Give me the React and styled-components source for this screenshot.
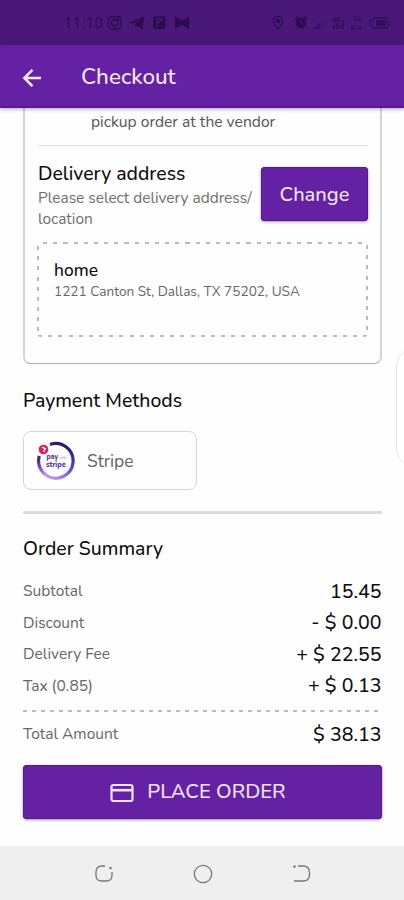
import React from 'react';
import styled, { createGlobalStyle, css } from 'styled-components';

const Global = createGlobalStyle`
  * { box-sizing: border-box; }
  body { margin: 0; background: #fff; }
`;

const Screen = styled.div`
  position: relative;
  width: 404px;
  height: 900px;
  overflow: hidden;
  display: flex;
  flex-direction: column;
  background: #fefefe;
  color: #0e0e0e;
  font-family: Nunito, Lato, sans-serif;
`;

const StatusBar = styled.header`
  flex: none;
  height: 45px;
  padding: 1px 14px 0 64px;
  display: flex;
  align-items: center;
  justify-content: space-between;
  background: #4a1879;
  color: #2b0d4e;
`;

const Clock = styled.span`
  width: 43px;
  font: 400 15px Roboto, sans-serif;
  letter-spacing: 0.4px;
`;

const StatusGroup = styled.div`
  display: flex;
  align-items: center;
`;

const StatusIcons = styled.svg`
  display: block;
  flex: none;
`;

const AppBar = styled.div`
  flex: none;
  height: 63px;
  padding: 2px 0 0 22px;
  display: flex;
  align-items: center;
  gap: 39px;
  background: #6421a4;
  border-bottom: 2px solid #5a159c;
  color: #f3e9fc;
  box-shadow: 0 1px 4px rgba(0, 0, 0, 0.35);
  z-index: 1;
`;

const BarTitle = styled.h1`
  margin: 0;
  font-size: 22.4px;
  font-weight: 500;
  line-height: 30px;
`;

const Content = styled.main`
  height: 738px;
  flex: none;
  padding: 0 22px 0 23px;
  display: flex;
  flex-direction: column;
`;

const Card = styled.section`
  flex: none;
  height: 256px;
  padding: 4px 12px 0 14px;
  border: 1px solid #b0b0b0;
  border-left: 2px solid #d4d4d4;
  border-right: 2px solid #d4d4d4;
  border-top: 0;
  border-radius: 0 0 7px 7px;
`;

const Note = styled.p`
  margin: 0 0 0 52px;
  font-size: 15.65px;
  line-height: 21px;
  color: #555;
`;

const Divider = styled.div`
  height: 1px;
  margin: 12px 0 16px -1px;
  background: #e2e2e2;
`;

const AddressRow = styled.div`
  display: flex;
  justify-content: space-between;
  align-items: flex-start;
  margin-left: -1px;
`;

const AddressText = styled.div`
  width: 222px;
`;

const Heading = styled.h2`
  margin: 0;
  font-size: 19.4px;
  font-weight: 500;
  line-height: 24px;
  white-space: nowrap;
`;

const Hint = styled.p`
  margin: 1px 0 0;
  font-size: 15.45px;
  line-height: 21px;
  color: #6f6f6f;
  white-space: nowrap;
`;

const filled = css`
  border: 0;
  border-radius: 4px;
  background: #6421a4;
  color: #f0e4fb;
  box-shadow: 0 1px 3px rgba(0, 0, 0, 0.4), inset 0 0 0 1px #5a159c;
  font-family: inherit;
  font-weight: 500;
`;

const ChangeButton = styled.button`
  ${filled}
  flex: none;
  width: 107px;
  height: 54px;
  margin-top: 5px;
  padding: 0;
  font-size: 20.1px;
`;

const AddressBox = styled.div`
  height: 95px;
  margin: 13px 0 0 -2px;
  padding: 17px 0 0 17px;
  border-radius: 4px;
  background-image:
    repeating-linear-gradient(90deg, transparent 0 6px, #b9b8c6 6px 10.17px),
    repeating-linear-gradient(90deg, transparent 0 1px, #b9b8c6 1px 5px, transparent 5px 10.17px),
    repeating-linear-gradient(180deg, transparent 0 4px, #b9b8c6 4px 8px, transparent 8px 10.17px),
    repeating-linear-gradient(180deg, transparent 0 3px, #b9b8c6 3px 7px, transparent 7px 10.17px);
  background-size: 100% 2px, 100% 2px, 2px 100%, 2px 100%;
  background-position: 0 0, 0 100%, 0 0, 100% 0;
  background-repeat: no-repeat;
`;

const AddressName = styled.h3`
  margin: 0;
  font-size: 17.4px;
  font-weight: 550;
  line-height: 23px;
`;

const AddressLine = styled.p`
  margin: 0;
  font-size: 13.65px;
  line-height: 19px;
  color: #666;
`;

const PaymentSection = styled.section`
  margin-top: 25px;
`;

const Method = styled.div`
  width: 174px;
  height: 59px;
  margin-top: 18px;
  padding-left: 12px;
  display: flex;
  align-items: center;
  gap: 11px;
  border: 1px solid #d6d6d6;
  border-radius: 8px;
  font-size: 17.4px;
  color: #626262;
`;

const Separator = styled.div`
  flex: none;
  height: 3px;
  margin-top: 21px;
  background: #dcdcdc;
`;

const Summary = styled.section`
  margin-top: 23px;
`;

const Line = styled.div`
  height: 31.5px;
  display: flex;
  align-items: center;
  justify-content: space-between;
`;

const Lines = styled.div`
  margin: 14px 0 9px;
`;

const Label = styled.span`
  font-size: 15.55px;
  color: #666;
`;

const Amount = styled.span`
  margin-right: 0.5px;
  padding-top: 1px;
  font-size: 19.6px;
  font-weight: 500;
`;

const DashedRule = styled.div`
  height: 2px;
  margin-bottom: 6px;
  background: repeating-linear-gradient(90deg, #bdbdbd 0 4px, transparent 4px 9px);
`;

const PlaceOrder = styled.button`
  ${filled}
  flex: none;
  height: 54px;
  margin-top: 15.5px;
  padding: 0 9px 1px 0;
  display: flex;
  align-items: center;
  justify-content: center;
  gap: 13px;
  font-size: 20.2px;
`;

const NavBar = styled.nav`
  flex: none;
  height: 54px;
  background: #efefef;
  display: flex;
  align-items: center;
  justify-content: space-between;
  padding: 1px 92px 0 94px;
`;

const EdgeHandle = styled.aside`
  position: absolute;
  left: 396px;
  top: 347px;
  width: 40px;
  height: 121px;
  border: 1.5px solid #e6e6e6;
  border-radius: 20px;
  background: #fff;
`;

const RingCaption = styled.text`
  font: ${p => p.$weight} ${p => p.$size}px Nunito, Lato, sans-serif;
  fill: ${p => p.$tone};
`;

const TinySignal = styled.text`
  font: 700 ${p => p.$size}px Roboto, sans-serif;
  fill: currentColor;
`;

function AppIcons() {
  return (
    <StatusIcons width="84" height="18" viewBox="0 0 84 18" fill="none" stroke="currentColor" strokeWidth="1.4">
      <rect x="1.5" y="2.5" width="12.5" height="12.5" rx="3.6" />
      <circle cx="7.75" cy="8.75" r="3.2" />
      <circle cx="11.2" cy="5.4" r=".6" />
      <path d="M22.5 8.7 37.5 2.2 35.2 15.3 30.2 11.7 28.2 13.8 27.4 10.8 34 5.2 26 9.8Z" fill="currentColor" stroke="none" />
      <rect x="46" y="2.5" width="12.5" height="12.5" rx="1.5" fill="currentColor" stroke="none" />
      <path d="M50 13V5h5L50 10" stroke="#4a1879" />
      <path d="M68 2.5 75 6.5 82 2.5V15L75 11 68 15Z" fill="currentColor" stroke="none" />
    </StatusIcons>
  );
}

function SystemIcons() {
  return (
    <StatusIcons width="119" height="18" viewBox="0 0 119 18" fill="none" stroke="currentColor" strokeWidth="1.3">
      <path d="M7 15.2C3.8 11.4 2.4 9.2 2.4 7a4.6 4.6 0 0 1 9.2 0c0 2.2-1.4 4.4-4.6 8.2Z" />
      <circle cx="7" cy="7" r="1.5" fill="currentColor" />
      <circle cx="30" cy="9" r="5.4" fill="currentColor" stroke="none" />
      <path d="M24 5.5 27 3M36 5.5 33 3" strokeWidth="1.8" />
      <path d="m30 6 0 3 2 2" stroke="#4a1879" strokeWidth=".8" />
      <path d="M43.5 15v-2M46 15v-3.5M48.5 15v-5.5" strokeWidth="1.5" />
      <path d="M52 15V7M54.5 15V4" opacity=".25" />
      <TinySignal x="61" y="7.5" $size="7" stroke="none">4G</TinySignal>
      <path d="M63 15v-4M66 15V9M69 15v-4M72 15V6" strokeWidth="1.5" />
      <TinySignal x="82" y="7" $size="7" stroke="none" opacity=".8">33</TinySignal>
      <TinySignal x="80" y="16" $size="7" stroke="none" opacity=".8">K/s</TinySignal>
      <path d="M103 4h12a2 2 0 0 1 2 2v6a2 2 0 0 1-2 2h-12l-2-2-2-1V7l2-1Z" opacity=".8" />
      <rect x="105" y="6" width="10" height="6" rx="1" fill="currentColor" stroke="none" opacity=".75" />
    </StatusIcons>
  );
}

function BackArrow() {
  return (
    <svg width="20" height="20" viewBox="0 0 20 20" fill="none" stroke="currentColor" strokeWidth="2.5">
      <path d="M19 11H3M10.5 2.8 2.3 11l8.2 8.2" />
    </svg>
  );
}

function StripeRing() {
  return (
    <svg width="40" height="40" viewBox="0 0 40 40" fill="none">
      <defs>
        <linearGradient id="ring" x1="28" y1="2" x2="12" y2="38" gradientUnits="userSpaceOnUse">
          <stop offset="0" stopColor="#211765" />
          <stop offset=".45" stopColor="#5040b0" />
          <stop offset=".8" stopColor="#9a7ce4" />
          <stop offset="1" stopColor="#cf9af0" />
        </linearGradient>
        <linearGradient id="ringLeft" x1="2" y1="15" x2="10" y2="34" gradientUnits="userSpaceOnUse">
          <stop offset="0" stopColor="#31206f" />
          <stop offset=".5" stopColor="#8239c8" />
          <stop offset="1" stopColor="#cf8fee" />
        </linearGradient>
      </defs>
      <path d="M14 3.6A17.3 17.3 0 1 1 10.5 34.5" stroke="url(#ring)" strokeWidth="3.2" />
      <path d="M3.3 15A17.3 17.3 0 0 0 10.6 34.5" stroke="url(#ringLeft)" strokeWidth="3.2" />
      <circle cx="7.5" cy="8.5" r="4.8" fill="#dc1f60" />
      <path d="M6.3 6.2 9.3 7.8 7.5 11" stroke="#fff" strokeWidth="1.4" />
      <RingCaption x="10.5" y="17.5" $size={6.8} $weight={800} $tone="#4b3a98">pay</RingCaption>
      <RingCaption x="23.5" y="17.5" $size={3.4} $weight={600} $tone="#9a92bd">with</RingCaption>
      <RingCaption x="10" y="25.5" $size={7.2} $weight={800} $tone="#47369c">stripe</RingCaption>
    </svg>
  );
}

function CardIcon() {
  return (
    <svg width="24" height="20" viewBox="0 0 24 20" fill="none" stroke="currentColor" strokeWidth="2.2">
      <rect x="1.5" y="3" width="21" height="16" rx="2" />
      <path d="M1.5 8.2h21" strokeWidth="2.6" />
    </svg>
  );
}

function NavGlyph({ children }) {
  return (
    <svg width="20" height="20" viewBox="0 0 20 20" fill="none" stroke="#777" strokeWidth="1.3">
      {children}
    </svg>
  );
}

const charges = [
  ['Subtotal', '15.45'],
  ['Discount', '- $ 0.00'],
  ['Delivery Fee', '+ $ 22.55'],
  ['Tax (0.85)', '+ $ 0.13'],
];

export default function App() {
  return (
    <Screen>
      <Global />
      <StatusBar>
        <StatusGroup>
          <Clock>11:10</Clock>
          <AppIcons />
        </StatusGroup>
        <SystemIcons />
      </StatusBar>
      <AppBar>
        <BackArrow />
        <BarTitle>Checkout</BarTitle>
      </AppBar>
      <Content>
        <Card>
          <Note>pickup order at the vendor</Note>
          <Divider />
          <AddressRow>
            <AddressText>
              <Heading>Delivery address</Heading>
              <Hint>Please select delivery address/<br />location</Hint>
            </AddressText>
            <ChangeButton>Change</ChangeButton>
          </AddressRow>
          <AddressBox>
            <AddressName>home</AddressName>
            <AddressLine>1221 Canton St, Dallas, TX 75202, USA</AddressLine>
          </AddressBox>
        </Card>
        <PaymentSection>
          <Heading>Payment Methods</Heading>
          <Method>
            <StripeRing />
            Stripe
          </Method>
        </PaymentSection>
        <Separator />
        <Summary>
          <Heading>Order Summary</Heading>
          <Lines>
            {charges.map(([label, amount]) => (
              <Line key={label}>
                <Label>{label}</Label>
                <Amount>{amount}</Amount>
              </Line>
            ))}
          </Lines>
          <DashedRule />
          <Line>
            <Label>Total Amount</Label>
            <Amount>$ 38.13</Amount>
          </Line>
        </Summary>
        <PlaceOrder>
          <CardIcon />
          PLACE ORDER
        </PlaceOrder>
      </Content>
      <NavBar>
        <NavGlyph>
          <path d="M11 2H8Q2 2 2 8v3.5q0 5.500 6 5.500h4q6 0 6-5.500V8" />
          <circle cx="16.500" cy="4" r=".6" />
        </NavGlyph>
        <NavGlyph>
          <circle cx="10" cy="10" r="8.7" />
        </NavGlyph>
        <NavGlyph>
          <path d="M6 2h5q6.500 0 6.500 6.500v2q0 6.500-6.500 6.500H2" />
          <circle cx="2.500" cy="2.500" r=".6" />
        </NavGlyph>
      </NavBar>
      <EdgeHandle />
    </Screen>
  );
}
